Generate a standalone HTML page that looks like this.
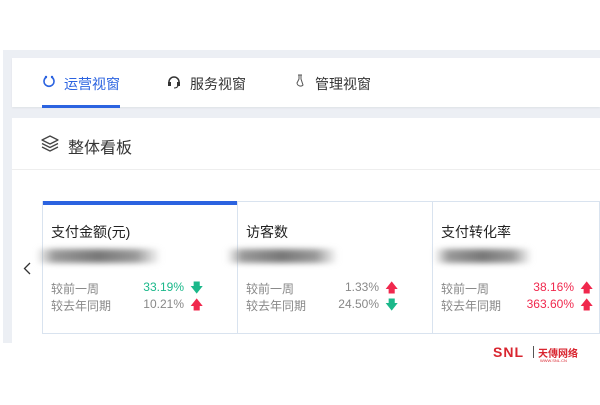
<!DOCTYPE html>
<html><head><meta charset="utf-8"><style>
*{margin:0;padding:0;box-sizing:border-box}
body{width:600px;height:405px;background:#fff;position:relative;overflow:hidden;font-family:"Liberation Sans","Noto Sans CJK SC",sans-serif;}
.abs{position:absolute}
.bg{left:3px;top:50px;width:597px;height:293px;background:#eceff4}
.tabs{left:12px;top:58px;width:588px;height:49px;background:#fff;box-shadow:0 1px 2px rgba(0,0,0,.06)}
.tab{top:74px;font-size:14px;color:#333}
.card{left:12px;top:118px;width:588px;height:225px;background:#fff}
.cell{top:201px;height:133px;border:1px solid #d9e3ef;background:#fff}
.t{font-size:14px;color:#222}
.lbl{font-size:12px;color:#888}
.v{font-size:12px;text-align:right}
.blur{height:14px;background:linear-gradient(90deg,rgba(255,255,255,0),#999 15%,#777 50%,#999 80%,rgba(255,255,255,0));filter:blur(3px)}
.g{color:#1bb88a}.r{color:#f0284d}.n{color:#888}
</style></head><body>
<div class="abs bg"></div>
<div class="abs tabs"></div>
<svg class="abs" style="left:43px;top:75px" width="12" height="13" viewBox="0 0 12 13"><path d="M3.5 2 A5 5 0 1 0 8.5 2" fill="none" stroke="#2b63e0" stroke-width="1.6"/><circle cx="3" cy="2" r="1.2" fill="#2b63e0"/><circle cx="9" cy="2" r="1.2" fill="#2b63e0"/></svg>
<div class="abs tab" style="left:64px;color:#2b63e0">运营视窗</div>
<div class="abs" style="left:42px;top:105px;width:78px;height:3px;background:#2b63e0"></div>
<svg class="abs" style="left:167px;top:75px" width="14" height="14" viewBox="0 0 14 14"><path d="M2 9 V7 A5 5 0 0 1 12 7 V9" fill="none" stroke="#333" stroke-width="1.5"/><rect x="1" y="7" width="3" height="4" fill="#333"/><rect x="10" y="7" width="3" height="4" fill="#333"/><path d="M11 11 Q10 13 7 13" fill="none" stroke="#333" stroke-width="1"/></svg>
<div class="abs tab" style="left:190px">服务视窗</div>
<svg class="abs" style="left:295px;top:74px" width="10" height="15" viewBox="0 0 10 15"><path d="M3 1 H7 M4 1 V5 L2 9 A3.5 3.5 0 0 0 8 11 L6 5 V1" fill="none" stroke="#555" stroke-width="1"/></svg>
<div class="abs tab" style="left:315px">管理视窗</div>
<div class="abs card"></div>
<div class="abs" style="left:12px;top:169px;width:588px;height:1px;background:#eee"></div>
<svg class="abs" style="left:41px;top:135px" width="18" height="17" viewBox="0 0 18 17"><path d="M9 1 L17 5 L9 9 L1 5 Z M1 8.5 L9 12.5 L17 8.5 M1 12 L9 16 L17 12" fill="none" stroke="#444" stroke-width="1.3" stroke-linejoin="round"/></svg>
<div class="abs" style="left:68px;top:134px;font-size:16px;color:#333">整体看板</div>
<div class="abs cell" style="left:42px;width:196px"></div>
<div class="abs cell" style="left:237px;width:196px"></div>
<div class="abs cell" style="left:432px;width:168px"></div>
<div class="abs" style="left:43px;top:201px;width:194px;height:4px;background:#2b63e0"></div>
<svg class="abs" style="left:23px;top:262px" width="8" height="13" viewBox="0 0 8 13"><path d="M7 1 L1.5 6.5 L7 12" fill="none" stroke="#333" stroke-width="1.3"/></svg>
<div class="abs t" style="left:51px;top:222px">支付金额(元)</div>
<div class="abs t" style="left:246px;top:222px">访客数</div>
<div class="abs t" style="left:441px;top:222px">支付转化率</div>
<div class="abs blur" style="left:36px;top:249px;width:125px"></div>
<div class="abs blur" style="left:226px;top:249px;width:112px"></div>
<div class="abs blur" style="left:434px;top:249px;width:98px"></div>
<div class="abs lbl" style="left:51px;top:280px">较前一周</div>
<div class="abs lbl" style="left:51px;top:297px">较去年同期</div>
<div class="abs v g" style="left:115px;top:280px;width:69px">33.19%</div>
<div class="abs v n" style="left:115px;top:297px;width:69px">10.21%</div>
<div class="abs g" style="left:190px;top:279px;font-size:13px">🡇</div>
<div class="abs r" style="left:190px;top:296px;font-size:13px">🡅</div>
<div class="abs lbl" style="left:246px;top:280px">较前一周</div>
<div class="abs lbl" style="left:246px;top:297px">较去年同期</div>
<div class="abs v n" style="left:310px;top:280px;width:69px">1.33%</div>
<div class="abs v n" style="left:310px;top:297px;width:69px">24.50%</div>
<div class="abs r" style="left:385px;top:279px;font-size:13px">🡅</div>
<div class="abs g" style="left:385px;top:296px;font-size:13px">🡇</div>
<div class="abs lbl" style="left:441px;top:280px">较前一周</div>
<div class="abs lbl" style="left:441px;top:297px">较去年同期</div>
<div class="abs v r" style="left:495px;top:280px;width:79px">38.16%</div>
<div class="abs v r" style="left:495px;top:297px;width:79px">363.60%</div>
<div class="abs r" style="left:580px;top:279px;font-size:13px">🡅</div>
<div class="abs r" style="left:580px;top:296px;font-size:13px">🡅</div>
<div class="abs" style="left:493px;top:344px;font-size:14px;font-weight:bold;color:#d9252f;letter-spacing:1px">SNL</div>
<div class="abs" style="left:533px;top:346px;width:1px;height:12px;background:#555"></div>
<div class="abs" style="left:538px;top:345px;font-size:10px;font-weight:bold;color:#d9252f">天傳网络</div>
<div class="abs" style="left:540px;top:358px;font-size:4px;color:#d9252f">WWW.SNL.CN</div>
</body></html>
